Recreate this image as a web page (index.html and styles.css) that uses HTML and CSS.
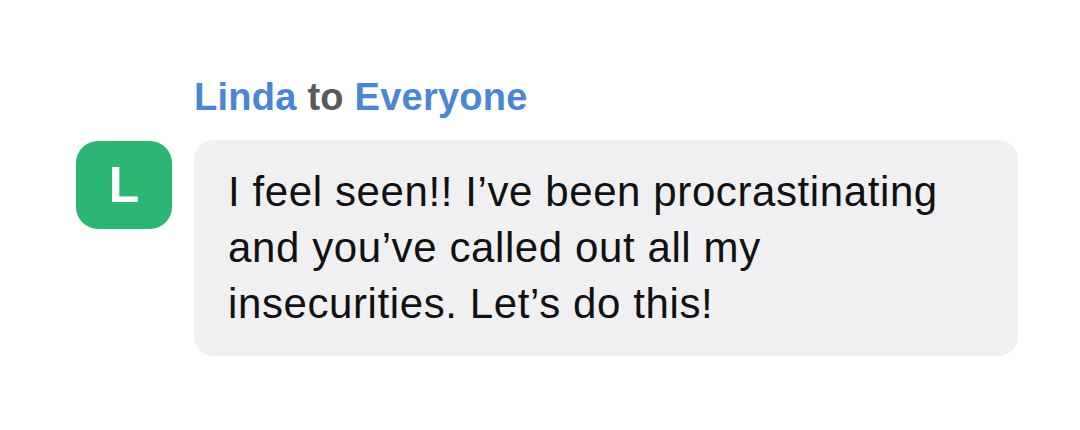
FILE: index.html
```html
<!DOCTYPE html>
<html lang="en">
<head>
    <meta charset="UTF-8">
    <meta name="viewport" content="width=device-width, initial-scale=1.0">
    <title>Chat message</title>
    <link rel="stylesheet" href="styles.css">
</head>
<body>
    <div class="chat">
        <div class="sender">
            <span class="name">Linda</span> <span class="to">to</span> <span class="name">Everyone</span>
        </div>
        <div class="avatar">L</div>
        <div class="bubble">
            I feel seen!! I’ve been procrastinating<br>
            and you’ve called out all my<br>
            insecurities. Let’s do this!
        </div>
    </div>
</body>
</html>
```

FILE: styles.css
```css
body {
    margin: 0;
    background-color: #fff;
    font-family: 'Liberation Sans', Arial, sans-serif;
    color: #111;
}
.chat {
    display: grid;
    grid-template-columns: 96px 824px;
    column-gap: 22px;
    row-gap: 21px;
    padding: 75px 0 0 76px;
}
.sender {
    grid-column: 2;
    font-size: 38px;
    font-weight: bold;
    line-height: 44px;
    letter-spacing: 0.25px;
}
.name {
    color: #4a85d6;
}
.to {
    color: #5a5a5a;
}
.avatar {
    grid-column: 1;
    width: 96px;
    height: 88px;
    margin-top: 1px;
    border-radius: 22px;
    background-color: #2bb673;
    color: #fff;
    font-size: 50px;
    font-weight: bold;
    display: flex;
    align-items: center;
    justify-content: center;
}
.bubble {
    background-color: #f0f0f2;
    border-radius: 20px;
    padding: 24px 20px 24px 34px;
    font-size: 42px;
    line-height: 56px;
    letter-spacing: 0.6px;
}
```
